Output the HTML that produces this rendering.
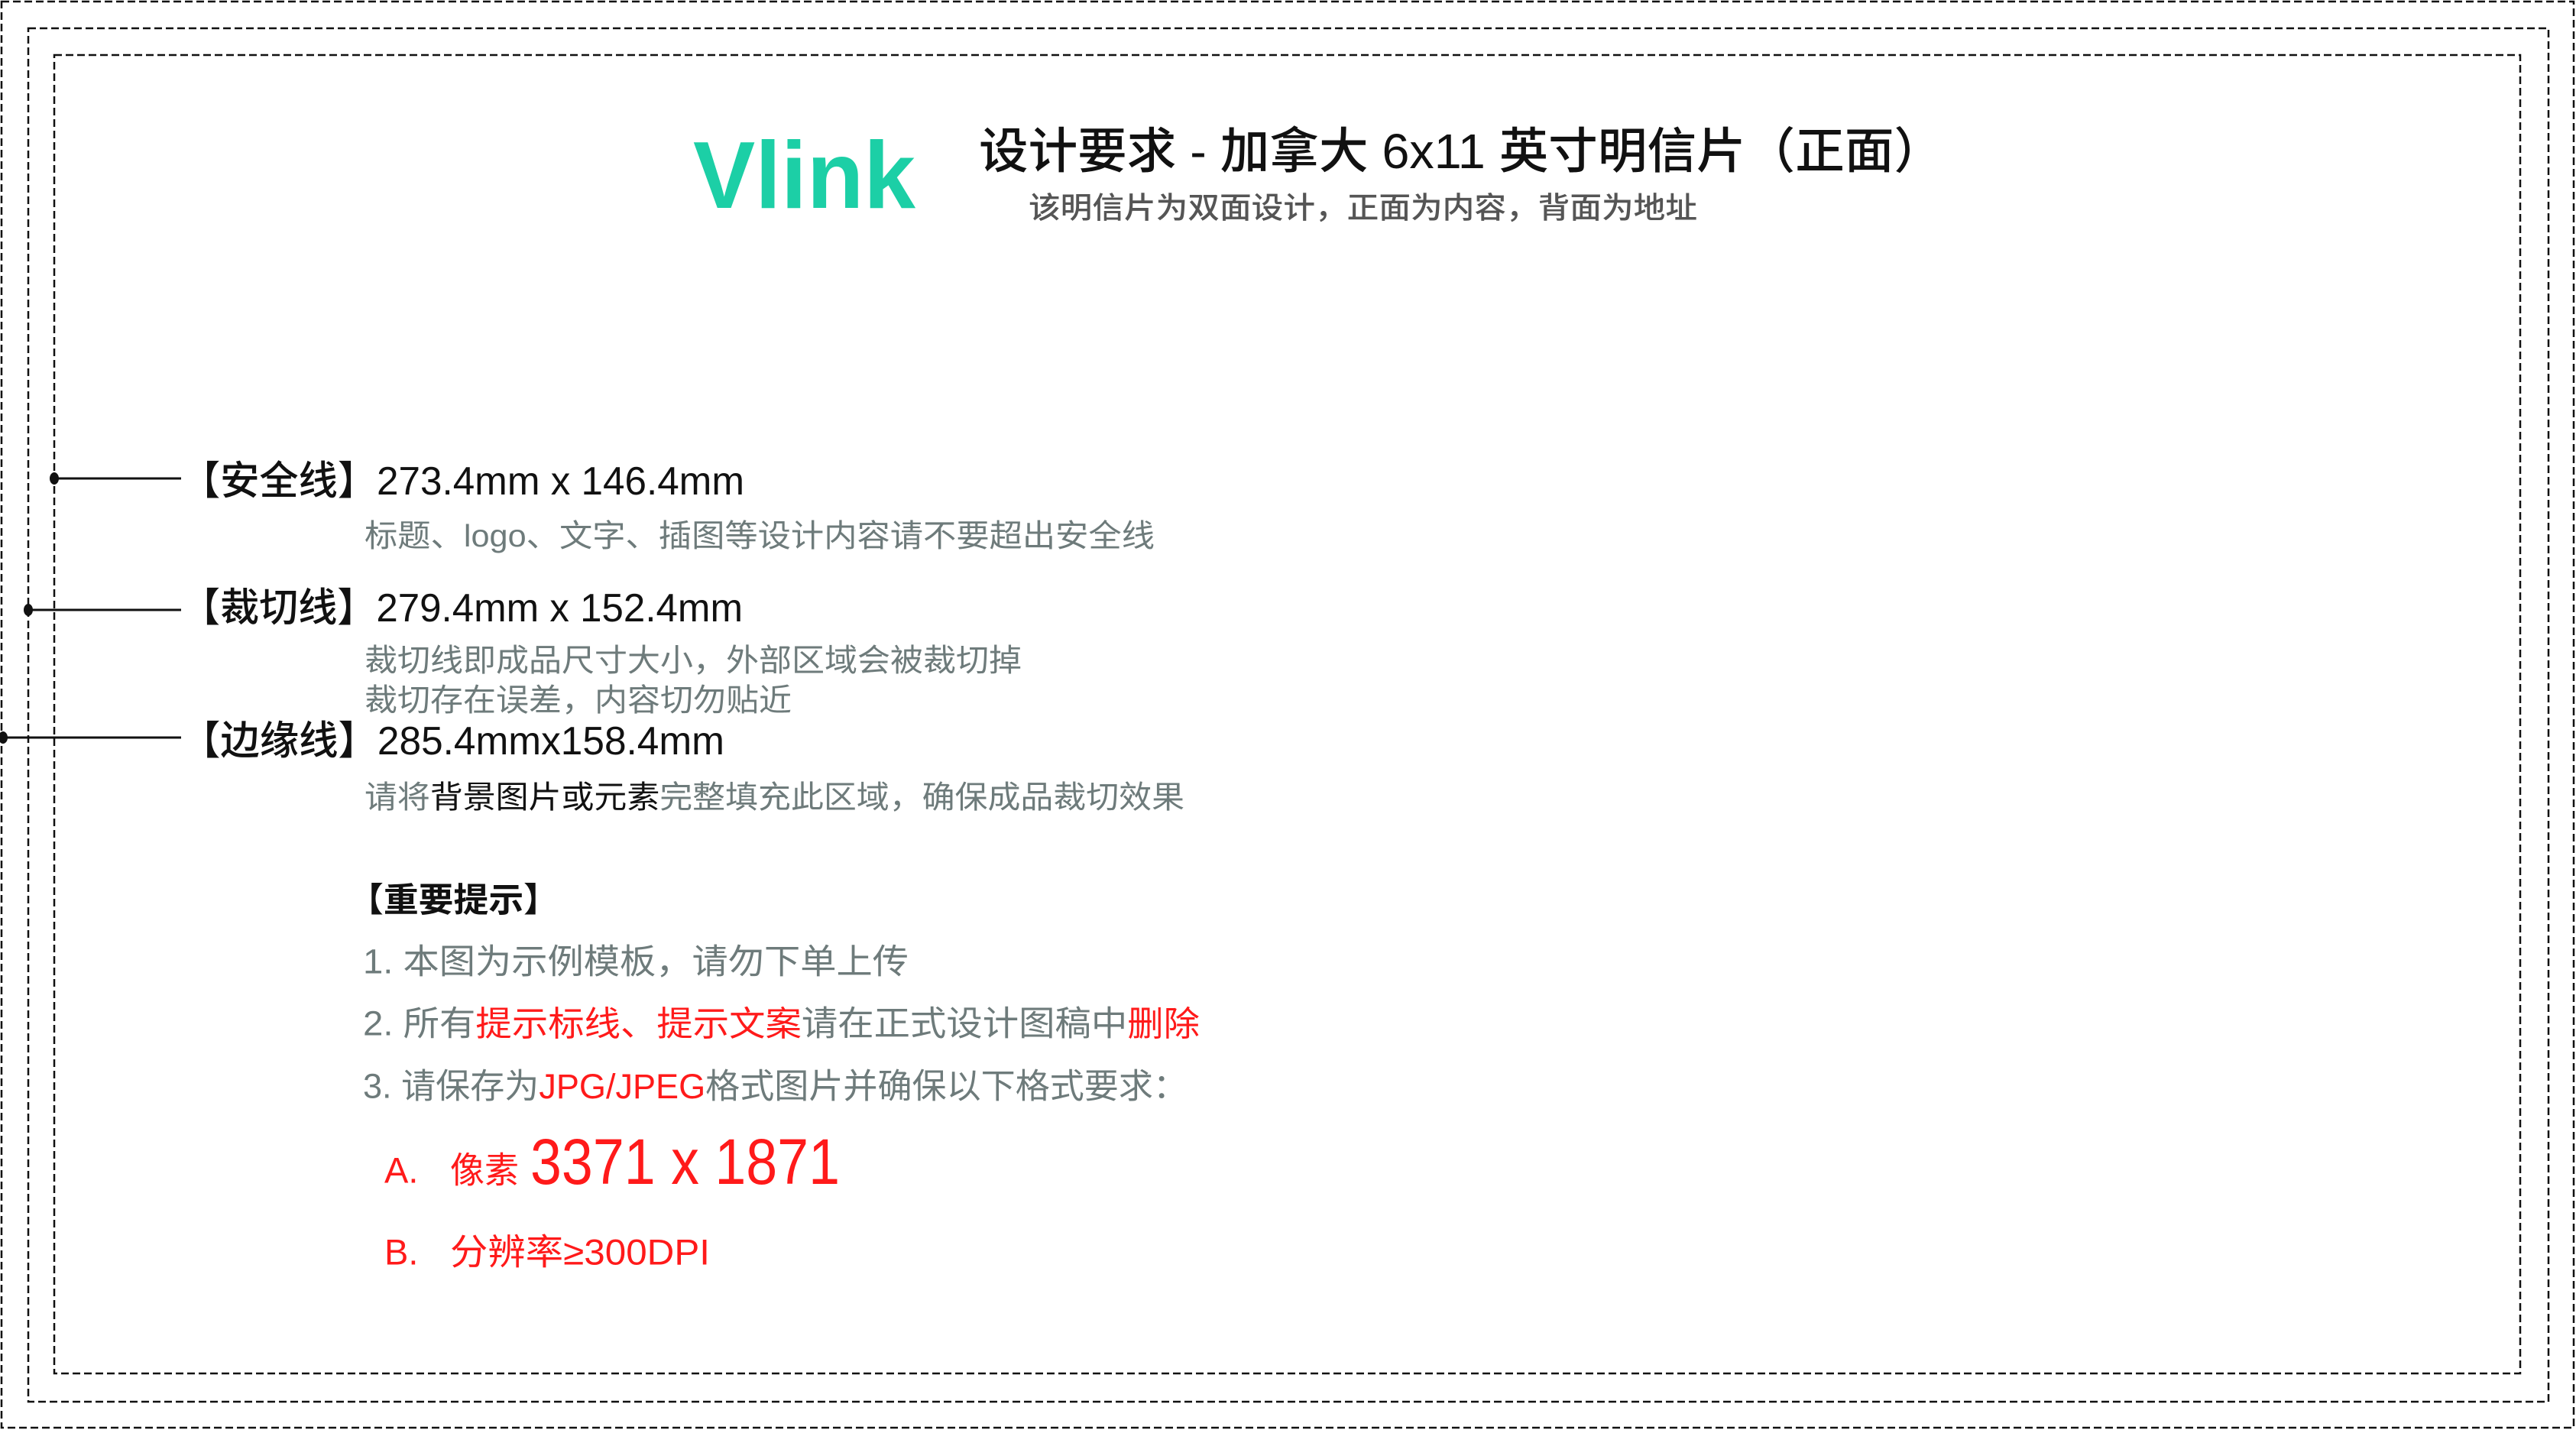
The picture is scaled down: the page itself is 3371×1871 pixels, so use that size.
<!DOCTYPE html>
<html><head><meta charset="utf-8"><style>
html,body{margin:0;padding:0;background:#fff;}
svg{display:block;}
text{font-family:"Liberation Sans","Noto Sans CJK SC",sans-serif;}
.c{font-family:"Noto Sans CJK SC","Liberation Sans",sans-serif;}
</style></head><body>
<svg width="3371" height="1871" viewBox="0 0 3371 1871" xmlns="http://www.w3.org/2000/svg">
<g fill="none" stroke="#111" stroke-width="2.5" stroke-dasharray="10 5">
<rect x="2" y="2" width="3366" height="1866"/>
<rect x="37" y="37" width="3298" height="1797"/>
<rect x="71" y="72" width="3227" height="1725"/>
</g>
<text x="907" y="272" font-size="124" font-weight="bold" fill="#1ccfa6" textLength="291" lengthAdjust="spacingAndGlyphs">Vlink</text>
<g class="c" dominant-baseline="central">
<text x="1281" y="198" font-size="64" font-weight="500" fill="#111" textLength="1262" lengthAdjust="spacingAndGlyphs">设计要求 - 加拿大 6x11 英寸明信片（正面）</text>
<text x="1346" y="273" font-size="39" font-weight="500" fill="#555" textLength="875" lengthAdjust="spacingAndGlyphs">该明信片为双面设计，正面为内容，背面为地址</text>

<text x="237" y="630" font-size="52" font-weight="500" fill="#111" textLength="737" lengthAdjust="spacingAndGlyphs">【安全线】273.4mm x 146.4mm</text>
<text x="477" y="701" font-size="41" fill="#6e7b7b" textLength="1034" lengthAdjust="spacingAndGlyphs">标题、logo、文字、插图等设计内容请不要超出安全线</text>

<text x="237" y="796" font-size="52" font-weight="500" fill="#111" textLength="735" lengthAdjust="spacingAndGlyphs">【裁切线】279.4mm x 152.4mm</text>
<text x="477" y="864" font-size="41" fill="#6e7b7b" textLength="860" lengthAdjust="spacingAndGlyphs">裁切线即成品尺寸大小，外部区域会被裁切掉</text>
<text x="477" y="916" font-size="41" fill="#6e7b7b" textLength="559" lengthAdjust="spacingAndGlyphs">裁切存在误差，内容切勿贴近</text>

<text x="237" y="970" font-size="52" font-weight="500" fill="#111" textLength="711" lengthAdjust="spacingAndGlyphs">【边缘线】285.4mmx158.4mm</text>
<text x="477" y="1043" font-size="41" fill="#6e7b7b" textLength="1073" lengthAdjust="spacingAndGlyphs">请将<tspan fill="#111">背景图片或元素</tspan>完整填充此区域，确保成品裁切效果</text>

<text x="456" y="1178" font-size="44" font-weight="bold" fill="#111" textLength="275" lengthAdjust="spacingAndGlyphs">【重要提示】</text>
<text x="475" y="1258" font-size="45" fill="#6e7b7b" textLength="714" lengthAdjust="spacingAndGlyphs">1. 本图为示例模板，请勿下单上传</text>
<text x="475" y="1339" font-size="45" fill="#6e7b7b" textLength="1095" lengthAdjust="spacingAndGlyphs">2. 所有<tspan fill="#ff1a1a">提示标线、提示文案</tspan>请在正式设计图稿中<tspan fill="#ff1a1a">删除</tspan></text>
<text x="475" y="1421" font-size="45" fill="#6e7b7b" textLength="1079" lengthAdjust="spacingAndGlyphs">3. 请保存为<tspan fill="#ff1a1a">JPG/JPEG</tspan>格式图片并确保以下格式要求：</text>

<text x="503" y="1531" font-size="47" fill="#ff1a1a">A.</text>
<text x="589" y="1531" font-size="47" fill="#ff1a1a" textLength="90" lengthAdjust="spacingAndGlyphs">像素</text>
<text x="694" y="1520" font-size="84" font-weight="500" fill="#ff1a1a" textLength="405" lengthAdjust="spacingAndGlyphs">3371 x 1871</text>
<text x="503" y="1638" font-size="47" fill="#ff1a1a">B.</text>
<text x="589" y="1638" font-size="47" fill="#ff1a1a" textLength="340" lengthAdjust="spacingAndGlyphs">分辨率≥300DPI</text>
</g>
<g stroke="#111" stroke-width="3">
<line x1="71" y1="626" x2="237" y2="626"/>
<line x1="37" y1="798" x2="237" y2="798"/>
<line x1="4" y1="965" x2="237" y2="965"/>
</g>
<g fill="#111">
<ellipse cx="71" cy="626" rx="6" ry="8"/>
<ellipse cx="37" cy="798" rx="6" ry="8"/>
<ellipse cx="4" cy="965" rx="6" ry="8"/>
</g>
</svg>
</body></html>
